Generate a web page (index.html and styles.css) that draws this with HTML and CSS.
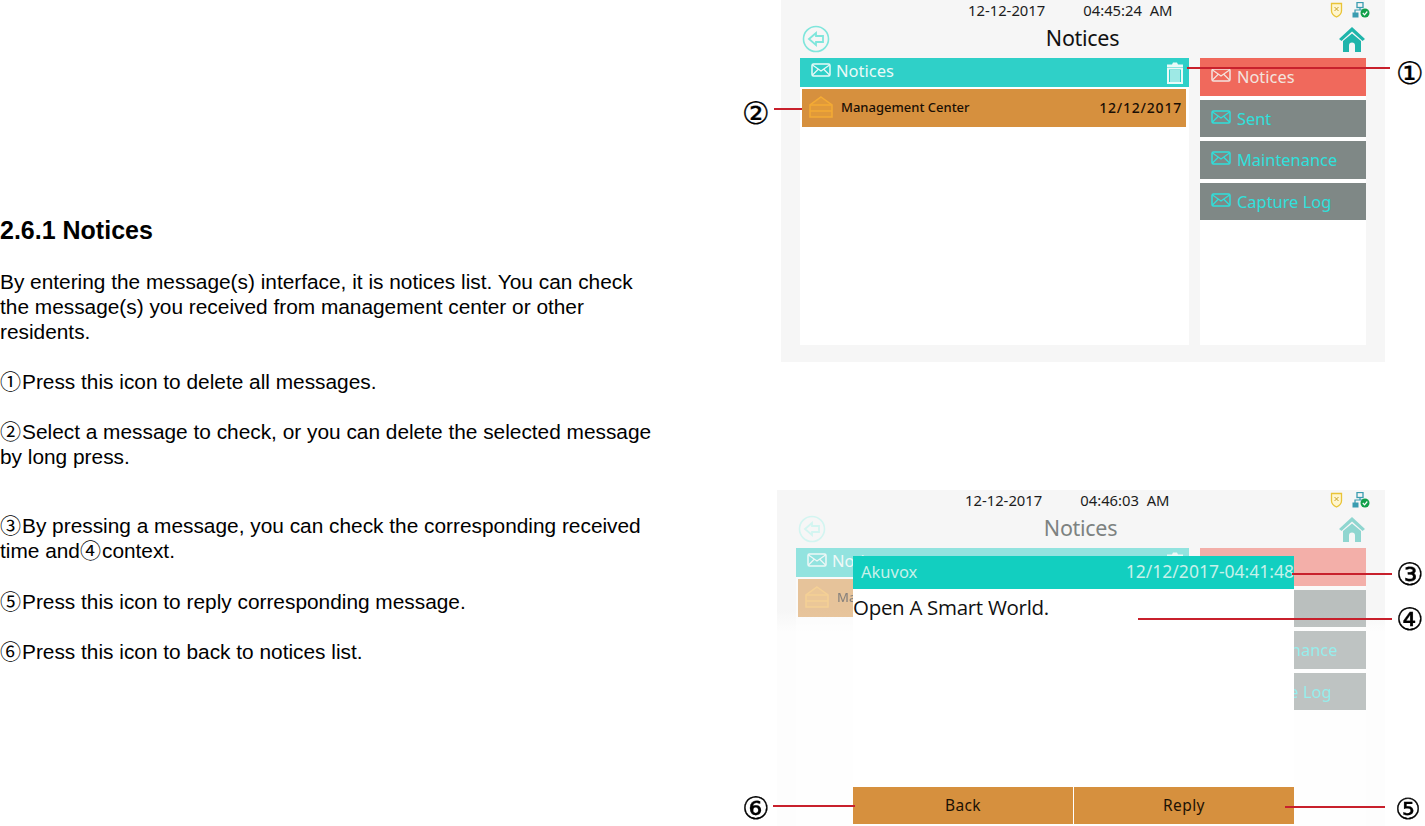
FILE: index.html
```html
<!DOCTYPE html>
<html lang="en">
<head>
    <meta charset="UTF-8">
    <meta name="viewport" content="width=device-width, initial-scale=1.0">
    <title>2.6.1 Notices</title>
    <link rel="stylesheet" href="styles.css">
</head>
<body>
    <svg class="icon-defs" width="0" height="0">
        <symbol id="i-mail" viewBox="0 0 20 14">
            <rect x="1" y="1" width="18" height="12" rx="1.5" fill="none" stroke="currentColor" stroke-width="1.5"/>
            <path d="M1.5 2 10 8 18.5 2M1.5 12 7 6.5M18.5 12 13 6.5" fill="none" stroke="currentColor" stroke-width="1.2"/>
        </symbol>
        <symbol id="i-back" viewBox="0 0 28 28">
            <circle cx="14" cy="14" r="12.5" fill="none" stroke="currentColor" stroke-width="1.6"/>
            <path d="M7 14 14 8V11H21V17H14V20Z" fill="none" stroke="currentColor" stroke-width="1.8"/>
        </symbol>
        <symbol id="i-home" viewBox="0 0 28 26">
            <path d="M1 13 14 1 27 13 24.500 15 14 5.500 3.500 15Z" fill="currentColor"/>
            <path d="M5 15 14 7.500 23 15V26H17V19.500A3 3 0 0 0 11 19.500V26H5Z" fill="currentColor"/>
        </symbol>
        <symbol id="i-shield" viewBox="0 0 12 16">
            <path d="M1 1.500H11V9C11 12 8 14 6 15 4 14 1 12 1 9Z" fill="#fff6cf" stroke="#e9c437" stroke-width="1.300"/>
            <path d="M4 5 8 9M8 5 4 9" stroke="#c9a227" stroke-width="1"/>
        </symbol>
        <symbol id="i-net" viewBox="0 0 18 16">
            <rect x="5" y="0.500" width="6" height="5" fill="none" stroke="#3a9cb0" stroke-width="1.300"/>
            <path d="M8 5.500V8M3 11V8H12" fill="none" stroke="#3a9cb0" stroke-width="1.200"/>
            <rect x="0.500" y="10.500" width="6" height="5" fill="#3a9cb0"/>
            <circle cx="13" cy="11" r="4.500" fill="#12a04a"/>
            <path d="M10.800 11 12.500 12.800 15.300 9.500" fill="none" stroke="#fff" stroke-width="1.200"/>
        </symbol>
        <symbol id="i-trash" viewBox="0 0 18 22">
            <path d="M7 0.500H11L12 2.500H17V5H1V2.500H6Z" fill="currentColor"/>
            <path d="M2 6.500H16V21H2Z" fill="none" stroke="currentColor" stroke-width="2"/>
            <rect x="4" y="8" width="10" height="12" fill="currentColor" opacity=".6"/>
        </symbol>
        <symbol id="i-inbox" viewBox="0 0 24 22">
            <path d="M12 1 23 9V21H1V9Z" fill="currentColor" fill-opacity=".35" stroke="currentColor" stroke-width="1.500"/>
            <path d="M1 9H23M1 15H23" stroke="currentColor" stroke-width="1.500"/>
        </symbol>
    </svg>

    <main class="page">
        <section class="manual-text">
            <h2>2.6.1 Notices</h2>
            <p>By entering the message(s) interface, it is notices list. You can check the message(s) you received from management center or other residents.</p>
            <p><span class="mark">①</span>Press this icon to delete all messages.</p>
            <p class="before-gap"><span class="mark">②</span>Select a message to check, or you can delete the selected message by long press.</p>
            <p class="wide-gap"><span class="mark">③</span>By pressing a message, you can check the corresponding received time and<span class="mark">④</span>context.</p>
            <p><span class="mark">⑤</span>Press this icon to reply corresponding message.</p>
            <p><span class="mark">⑥</span>Press this icon to back to notices list.</p>
        </section>

        <section class="figures">
            <div class="figure figure-list">
                <div class="screen screen-list">
                    <div class="status">
                        <span>12-12-2017</span>
                        <span class="status-time">04:45:24&nbsp; AM</span>
                        <span class="status-icons">
                            <svg class="ic-shield"><use href="#i-shield"/></svg>
                            <svg class="ic-net"><use href="#i-net"/></svg>
                        </span>
                    </div>
                    <div class="title-row">
                        <svg class="ic-back"><use href="#i-back"/></svg>
                        <span class="title">Notices</span>
                        <svg class="ic-home"><use href="#i-home"/></svg>
                    </div>
                    <div class="content">
                        <div class="list">
                            <div class="list-head">
                                <svg class="ic-mail"><use href="#i-mail"/></svg>
                                <span>Notices</span>
                                <svg class="ic-trash"><use href="#i-trash"/></svg>
                            </div>
                            <div class="list-row">
                                <svg class="ic-inbox"><use href="#i-inbox"/></svg>
                                <span class="sender">Management Center</span>
                                <span class="row-date">12/12/2017</span>
                            </div>
                        </div>
                        <div class="menu">
                            <div class="menu-item active"><svg class="ic-mail"><use href="#i-mail"/></svg><span>Notices</span></div>
                            <div class="menu-item"><svg class="ic-mail"><use href="#i-mail"/></svg><span>Sent</span></div>
                            <div class="menu-item"><svg class="ic-mail"><use href="#i-mail"/></svg><span>Maintenance</span></div>
                            <div class="menu-item"><svg class="ic-mail"><use href="#i-mail"/></svg><span>Capture Log</span></div>
                        </div>
                    </div>
                </div>
                <i class="line line-1"></i><span class="num num-1">①</span>
                <i class="line line-2"></i><span class="num num-2">②</span>
            </div>

            <div class="figure figure-detail">
                <div class="screen screen-detail">
                    <div class="status">
                        <span>12-12-2017</span>
                        <span class="status-time">04:46:03&nbsp; AM</span>
                        <span class="status-icons">
                            <svg class="ic-shield"><use href="#i-shield"/></svg>
                            <svg class="ic-net"><use href="#i-net"/></svg>
                        </span>
                    </div>
                    <div class="title-row dimmed-title">
                        <svg class="ic-back"><use href="#i-back"/></svg>
                        <span class="title">Notices</span>
                        <svg class="ic-home"><use href="#i-home"/></svg>
                    </div>
                    <div class="content">
                        <div class="list">
                            <div class="list-head">
                                <svg class="ic-mail"><use href="#i-mail"/></svg>
                                <span>Notices</span>
                                <svg class="ic-trash"><use href="#i-trash"/></svg>
                            </div>
                            <div class="list-row">
                                <svg class="ic-inbox"><use href="#i-inbox"/></svg>
                                <span class="sender">Management Center</span>
                                <span class="row-date">12/12/2017</span>
                            </div>
                        </div>
                        <div class="menu">
                            <div class="menu-item active"><svg class="ic-mail"><use href="#i-mail"/></svg><span>Notices</span></div>
                            <div class="menu-item"><svg class="ic-mail"><use href="#i-mail"/></svg><span>Sent</span></div>
                            <div class="menu-item"><svg class="ic-mail"><use href="#i-mail"/></svg><span>Maintenance</span></div>
                            <div class="menu-item"><svg class="ic-mail"><use href="#i-mail"/></svg><span>Capture Log</span></div>
                        </div>
                    </div>
                    <div class="dialog">
                        <div class="dialog-head">
                            <span>Akuvox</span>
                            <span class="dialog-date">12/12/2017-04:41:48</span>
                        </div>
                        <div class="dialog-body">Open A Smart World.</div>
                        <div class="dialog-actions">
                            <button>Back</button>
                            <button>Reply</button>
                        </div>
                    </div>
                </div>
                <i class="line line-3"></i><span class="num num-3">③</span>
                <i class="line line-4"></i><span class="num num-4">④</span>
                <i class="line line-5"></i><span class="num num-5">⑤</span>
                <i class="line line-6"></i><span class="num num-6">⑥</span>
            </div>
        </section>
    </main>
</body>
</html>
```

FILE: styles.css
```css
html, body {
    margin: 0;
    height: 826px;
    overflow: hidden;
    background: #fff;
}
.icon-defs {
    position: absolute;
}
.page {
    display: flex;
    justify-content: space-between;
    font-family: "Liberation Sans", Arial, sans-serif;
    color: #000;
}

/* manual text, left side */
.manual-text {
    width: 660px;
    padding-top: 216px;
    font-size: 20.850px;
    line-height: 25px;
}
.manual-text h2 {
    margin: 0 0 25px;
    font-size: 25px;
    line-height: 28px;
}
.manual-text p {
    margin: 0 0 25px;
}
.manual-text p.before-gap {
    margin-bottom: 44px;
}
.manual-text p.wide-gap {
    margin-bottom: 26px;
}
.mark {
    font-family: "Noto Sans CJK JP", "DejaVu Sans", sans-serif;
    font-size: 21px;
    letter-spacing: 1px;
    line-height: 1;
}

/* screenshots, right side */
.figures {
    width: 685px;
    font-family: "Noto Sans", sans-serif;
}
.figure {
    position: relative;
}
.figure-list {
    height: 490px;
    padding-left: 41px;
    box-sizing: border-box;
}
.figure-detail {
    height: 336px;
    padding-left: 37px;
    box-sizing: border-box;
}
.screen {
    position: relative;
    display: flex;
    flex-direction: column;
    background: #f6f6f6;
    box-sizing: border-box;
    overflow: hidden;
}
.screen-list {
    width: 604px;
    height: 362px;
    padding-bottom: 17px;
}
.screen-detail {
    width: 608px;
    height: 336px;
    background: linear-gradient(#f6f6f6 120px, #fdfdfd 142px);
}
.status {
    display: flex;
    align-items: center;
    height: 20px;
    padding: 0 15px 0 187px;
    font-size: 14.800px;
    color: #1c1c1c;
}
.screen-detail .status {
    padding-left: 188px;
}
.status-time {
    margin-left: 38px;
}
.status-icons {
    display: flex;
    align-items: center;
    gap: 9px;
    margin-left: auto;
}
.ic-shield {
    width: 13px;
    height: 16px;
}
.ic-net {
    width: 18px;
    height: 16px;
}
.title-row {
    display: flex;
    align-items: center;
    justify-content: space-between;
    height: 38px;
    padding: 0 19px 0 21px;
    color: #7fe6dc;
}
.title {
    margin: 0 3px 4px 0;
    font-size: 21.500px;
    color: #111;
    letter-spacing: -0.3px;
}
.ic-back {
    width: 28px;
    height: 28px;
}
.ic-home {
    width: 28px;
    height: 26px;
    color: #1fb5ab;
}
.dimmed-title {
    color: #d3f5f1;
}
.dimmed-title .title {
    color: #7d8281;
}
.dimmed-title .ic-home {
    color: #8fd6d0;
}
.content {
    display: flex;
    flex: 1;
    gap: 11px;
    padding: 0 19px;
}
.screen-detail .content {
    opacity: 0.5;
}
.list {
    flex: 1;
    background: #fff;
}
.list-head {
    display: flex;
    align-items: center;
    gap: 4px;
    height: 29px;
    padding: 0 5px 5px 10px;
    box-sizing: border-box;
    background: #2fd0c8;
    color: #eafaf8;
    font-size: 16.500px;
}
.list-head .ic-mail {
    width: 22px;
}
.list-head .ic-trash {
    margin: 5px 0 0 auto;
}
.ic-mail {
    flex: none;
    width: 20px;
    height: 14px;
}
.ic-trash {
    width: 18px;
    height: 22px;
}
.list-row {
    display: flex;
    align-items: center;
    height: 38px;
    margin: 2px 3px 0 2px;
    padding: 0 4px 2px 7px;
    box-sizing: border-box;
    background: #d6903e;
    font-size: 13px;
    font-weight: 500;
    color: #1a0f05;
}
.ic-inbox {
    width: 24px;
    height: 22px;
    margin-right: 8px;
    color: #f4ab35;
}
.row-date {
    margin-left: auto;
    font-size: 14px;
    letter-spacing: 0.8px;
}
.menu {
    display: flex;
    flex-direction: column;
    gap: 4px;
    width: 166px;
    background: #fff;
}
.menu-item {
    display: flex;
    align-items: center;
    gap: 6px;
    height: 37.500px;
    padding: 0 0 3px 11px;
    box-sizing: border-box;
    background: #7f8886;
    color: #2fe0dc;
    font-size: 16.400px;
}
.menu-item span {
    padding-top: 3px;
}
.menu-item.active {
    background: #f0695c;
    color: #f3e4df;
}

/* message popup sits over the list */
.dialog {
    position: absolute;
    top: 66px;
    left: 76px;
    width: 441px;
    height: 268px;
    display: flex;
    flex-direction: column;
    background: #fff;
}
.dialog-head {
    display: flex;
    align-items: center;
    justify-content: space-between;
    height: 33px;
    padding: 0 0 3px 8px;
    box-sizing: border-box;
    background: #12cfc0;
    color: #c6f1ea;
    font-size: 16.500px;
}
.dialog-date {
    font-size: 17.500px;
}
.dialog-body {
    flex: 1;
    padding-top: 4px;
    font-family: "Open Sans", sans-serif;
    font-size: 20.500px;
    letter-spacing: -0.3px;
    color: #111;
}
.dialog-actions {
    display: flex;
    gap: 1px;
}
.dialog-actions button {
    flex: 1;
    height: 37px;
    padding: 0 0 1px;
    border: none;
    background: #d6903e;
    font-family: "Noto Sans", sans-serif;
    font-size: 15.500px;
    letter-spacing: 0.4px;
    color: #1d1205;
}

/* callout lines and numbers */
.line {
    position: absolute;
    height: 2px;
    background: #c8202c;
}
.num {
    position: absolute;
    font-family: "DejaVu Sans", sans-serif;
    font-size: 31px;
    line-height: 26px;
    color: #000;
    -webkit-text-stroke: 0.300px #000;
}
.line-1 { top: 67px; left: 447px; width: 203px; }
.num-1 { top: 60px; left: 656px; }
.line-2 { top: 108px; left: 34px; width: 28px; }
.num-2 { top: 100px; left: 2px; }
.line-3 { top: 83px; left: 552px; width: 100px; }
.num-3 { top: 71px; left: 656px; }
.line-4 { top: 128px; left: 398px; width: 254px; }
.num-4 { top: 116px; left: 656px; }
.line-5 { top: 316px; left: 545px; width: 100px; }
.num-5 { top: 306px; left: 655px; font-size: 29px; }
.line-6 { top: 315px; left: 33px; width: 82px; }
.num-6 { top: 305px; left: 2px; }
```
